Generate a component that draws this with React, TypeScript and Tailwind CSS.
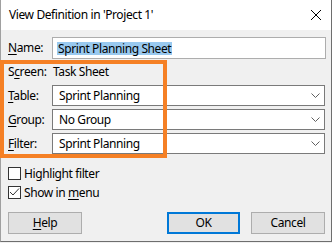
function U({ children }: { children: string }) {
  return <span className="underline underline-offset-2">{children}</span>;
}

function Chevron() {
  return (
    <svg width="9" height="5" viewBox="0 0 9 5" className="shrink-0">
      <polyline points="0.5,0.5 4.5,4.5 8.5,0.5" fill="none" stroke="#606060" strokeWidth="1" />
    </svg>
  );
}

function Select({ value }: { value: string }) {
  return (
    <div className="flex h-[21px] w-[273px] items-center justify-between border border-[#7a7a7a] bg-white pl-[6px] pr-[4px]">
      <span>{value}</span>
      <Chevron />
    </div>
  );
}

function Check({ checked, children }: { checked?: boolean; children: React.ReactNode }) {
  return (
    <div className="flex h-[19px] items-center gap-[3px]">
      <div className="flex h-[13px] w-[13px] items-center justify-center border border-[#333333] bg-white">
        {checked && (
          <svg width="11" height="11" viewBox="0 0 11 11">
            <polyline points="1,5 4,8 10,1.5" fill="none" stroke="#333333" strokeWidth="1" />
          </svg>
        )}
      </div>
      <span>{children}</span>
    </div>
  );
}

export default function App() {
  const labels = "w-[44px] shrink-0";
  return (
    <div className="h-[243px] w-[332px] bg-[#f0f0f0]">
      <div
        className="relative h-[242px] w-[332px] border-b border-l border-r border-b-[#6e6e6e] border-l-[#a0a0a0] border-r-[#6e6e6e] bg-[#f0f0f0] text-[12px] tracking-[-0.4px] text-black"
        style={{ fontFamily: '"Segoe UI", "Noto Sans", sans-serif' }}
      >
        <div className="flex h-[30px] items-center justify-between bg-white pl-[8px] pr-[10px]">
          <span>View Definition in 'Project 1'</span>
          <svg width="10" height="10" viewBox="0 0 10 10">
            <path d="M0,0 L10,10 M10,0 L0,10" stroke="#000" strokeWidth="1" />
          </svg>
        </div>

        <div className="pl-[7px] pt-[7px]">
          <div className="flex h-[22px] items-center">
            <span className={labels}>
              <U>N</U>ame:
            </span>
            <div className="flex h-[22px] w-[274px] items-center border border-[#adadad] bg-white pl-[4px]">
              <span className="bg-[#99c9ef] px-[1px] leading-[13px]">Sprint Planning Sheet</span>
            </div>
          </div>

          <div className="flex h-[26px] items-center">
            <span className={labels}>
              S<U>c</U>reen:
            </span>
            <span className="pl-[1px]">Task Sheet</span>
          </div>

          <div className="flex flex-col gap-[3px]">
            <div className="flex items-center">
              <span className={labels}>
                <U>T</U>able:
              </span>
              <Select value="Sprint Planning" />
            </div>
            <div className="flex items-center">
              <span className={labels}>
                <U>G</U>roup:
              </span>
              <Select value="No Group" />
            </div>
            <div className="flex items-center">
              <span className={labels}>
                <U>F</U>ilter:
              </span>
              <Select value="Sprint Planning" />
            </div>
          </div>

          <div className="mt-[10px]">
            <Check>
              Hi<U>g</U>hlight filter
            </Check>
            <Check checked>
              Show in <U>m</U>enu
            </Check>
          </div>

          <div className="mt-[10px] flex items-center">
            <button className="h-[22px] w-[74px] border border-[#adadad] bg-[#e1e1e1]">
              <U>H</U>elp
            </button>
            <button className="ml-[85px] h-[22px] w-[73px] border-2 border-[#0078d7] bg-[#e1e1e1]">OK</button>
            <button className="ml-[11px] h-[22px] w-[74px] border border-[#adadad] bg-[#e1e1e1]">Cancel</button>
          </div>
        </div>

        <div className="pointer-events-none absolute left-[-1px] top-[60px] h-[98px] w-[167px] border-4 border-[#f58025]" />
      </div>
    </div>
  );
}
